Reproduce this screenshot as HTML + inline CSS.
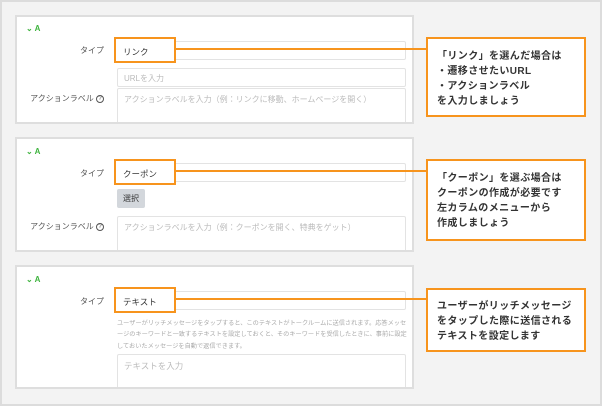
<!DOCTYPE html>
<html><head><meta charset="utf-8"><style>
*{margin:0;padding:0;box-sizing:border-box}
body{width:602px;height:406px;background:#f3f3f3;position:relative;overflow:hidden;font-family:"Liberation Sans","Noto Sans CJK JP",sans-serif;box-shadow:inset 0 0 0 2px #dcdcdc}
.a{position:absolute}
.panel{position:absolute;left:15px;width:399px;background:#fff;border:2px solid #dedede;overflow:hidden}
.h{position:absolute;left:9px;color:#3db33d;font-size:8px;font-weight:bold}
.lbl{position:absolute;right:308px;font-size:8px;color:#555;text-align:right;white-space:nowrap}
.inp{position:absolute;left:100px;width:289px;border:1px solid #e3e3e3;border-radius:2px;background:#fff;font-size:8px;color:#bbb;padding-left:6px}
.ob{position:absolute;border:2px solid #f7941d;left:114px;width:62px;height:26px;background:#fff;font-size:8.5px;color:#333;padding:7px 0 0 7px}
.line{position:absolute;left:176px;width:250px;height:2px;background:#f7941d}
.co{position:absolute;left:426px;width:160px;border:2px solid #f7941d;background:#fff;font-size:10px;font-weight:bold;color:#333;line-height:15px;padding-left:9px;letter-spacing:.4px;white-space:nowrap}
.q{display:inline-block;width:8px;height:8px;border:1px solid #555;border-radius:50%;font-size:6px;line-height:6px;text-align:center;vertical-align:middle}
</style></head><body>
<div class="panel" style="top:15px;height:109px">
 <div class="h" style="top:7px">⌄ A</div>
 <div class="lbl" style="top:28px">タイプ</div>
 <div class="inp" style="top:24px;height:19px"></div>
 <div class="inp" style="top:51px;height:19px;padding-top:4px">URLを入力</div>
 <div class="lbl" style="top:76px">アクションラベル <span class="q">?</span></div>
 <div class="inp" style="top:71px;height:40px;padding-top:5px">アクションラベルを入力（例：リンクに移動、ホームページを開く）</div>
</div>
<div class="panel" style="top:137px;height:115px">
 <div class="h" style="top:8px">⌄ A</div>
 <div class="lbl" style="top:29px">タイプ</div>
 <div class="inp" style="top:24px;height:19px"></div>
 <div class="a" style="left:100px;top:50px;width:28px;height:19px;background:#d3d7dc;border-radius:2px;font-size:8px;color:#333;text-align:center;line-height:19px">選択</div>
 <div class="lbl" style="top:82px">アクションラベル <span class="q">?</span></div>
 <div class="inp" style="top:77px;height:40px;padding-top:5px">アクションラベルを入力（例：クーポンを開く、特典をゲット）</div>
</div>
<div class="panel" style="top:265px;height:124px">
 <div class="h" style="top:8px">⌄ A</div>
 <div class="lbl" style="top:29px">タイプ</div>
 <div class="inp" style="top:24px;height:19px"></div>
 <div class="a" style="left:100px;top:51px;width:290px;font-size:6.2px;line-height:11.3px;color:#aaa">ユーザーがリッチメッセージをタップすると、このテキストがトークルームに送信されます。応答メッセージのキーワードと一致するテキストを設定しておくと、そのキーワードを受信したときに、事前に設定しておいたメッセージを自動で返信できます。</div>
 <div class="inp" style="top:87px;height:40px;padding-top:5px;font-size:8.5px">テキストを入力</div>
</div>
<div class="ob" style="top:37px">リンク</div>
<div class="ob" style="top:159px">クーポン</div>
<div class="ob" style="top:287px">テキスト</div>
<div class="line" style="top:48px"></div>
<div class="line" style="top:170px"></div>
<div class="line" style="top:298px"></div>
<div class="co" style="top:37px;height:80px;padding-top:10px">「リンク」を選んだ場合は<br>・遷移させたいURL<br>・アクションラベル<br>を入力しましょう</div>
<div class="co" style="top:159px;height:82px;padding-top:10px">「クーポン」を選ぶ場合は<br>クーポンの作成が必要です<br>左カラムのメニューから<br>作成しましょう</div>
<div class="co" style="top:288px;height:64px;padding-top:9px">ユーザーがリッチメッセージ<br>をタップした際に送信される<br>テキストを設定します</div>
</body></html>
